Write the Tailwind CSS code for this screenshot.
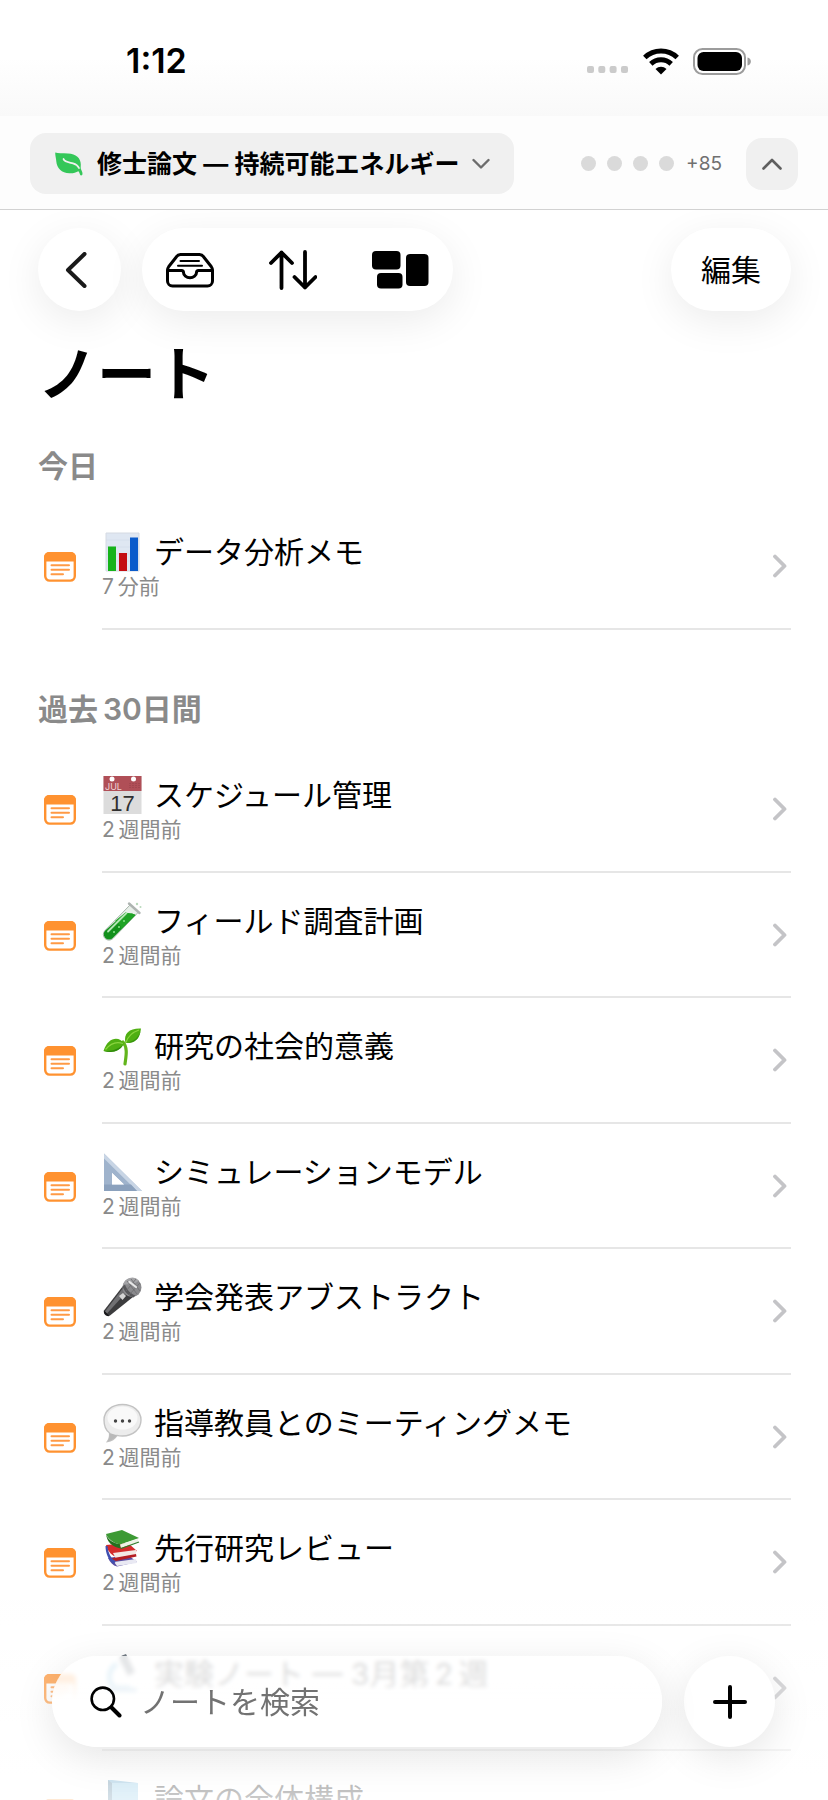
<!DOCTYPE html>
<html lang="ja">
<head>
  <meta charset="UTF-8" />
  <meta name="viewport" content="width=device-width, initial-scale=1" />
  <title>ノート</title>
  <script src="https://cdn.jsdelivr.net/npm/@tailwindcss/browser@4"></script>
</head>
<body class="bg-white text-black h-screen overflow-hidden flex flex-col font-['Inter','Noto_Sans_CJK_JP',sans-serif]">

  <!-- Icon sprite -->
  <svg class="hidden" xmlns="http://www.w3.org/2000/svg">
    <symbol id="note" viewBox="0 0 32 30">
      <rect x="1.2" y="1.2" width="29.6" height="27.4" rx="4.5" fill="#fff" stroke="#ff9230" stroke-width="2.4" />
      <path d="M0 9.5V5a5 5 0 0 1 5-5h22a5 5 0 0 1 5 5v4.5Z" fill="#ff9230" />
      <path d="M7.5 13.3h17.5M7.5 17.8h17.5M7.5 22.3h11.5" stroke="#ff9a45" stroke-width="2" stroke-linecap="round" />
    </symbol>
    <symbol id="chevron" viewBox="0 0 14 24">
      <path d="M2 2.5 11.5 12 2 21.5" fill="none" stroke="#c4c4c7" stroke-width="3.8" stroke-linecap="round" stroke-linejoin="round" />
    </symbol>

    <symbol id="chart" viewBox="0 0 40 40">
      <rect x="4" y="1" width="33" height="38" fill="#dfe7f2" />
      <path d="M4 8h33M4 15h33M4 22h33M4 29h33" stroke="#d6dfec" stroke-width="1" />
      <path d="M4 1h33v38H4Z" fill="none" stroke="#d5dae2" stroke-width="1" />
      <rect x="6" y="14.5" width="8" height="24.5" fill="#16b31b" />
      <rect x="17" y="21" width="8" height="18" fill="#c40d12" />
      <rect x="28" y="5.5" width="8" height="33.5" fill="#0a5bcb" />
    </symbol>
    <symbol id="calendar" viewBox="0 0 40 40">
      <rect x="1.5" y="1" width="38" height="38" fill="#dcdcdc" />
      <rect x="1.5" y="1" width="38" height="15" fill="#b04f57" />
      <circle cx="10" cy="4" r="2.5" fill="#fff" />
      <circle cx="31.5" cy="4" r="2.5" fill="#fff" />
      <path d="M28 8v5M31 8v5M34 8v5M37 8v5" stroke="#944049" stroke-width="1" stroke-dasharray="1 1" />
      <text x="3" y="15" font-size="9" fill="#f0d4d6" font-family="Inter, sans-serif">JUL</text>
      <text x="20.5" y="35.5" font-size="22" fill="#303030" text-anchor="middle" font-family="Liberation Sans, sans-serif">17</text>
    </symbol>
    <symbol id="tube" viewBox="0 0 40 40">
      <path d="M28.5 3.5 36.5 11 11 37.5a5.6 5.6 0 0 1-8-8Z" fill="#e8efe9" stroke="#a9b8ad" stroke-width="1" />
      <path d="M23.5 11.500c3 1.5 6 0 10 2.5L10.8 37a5.3 5.3 0 0 1-7.5-7.5Z" fill="#12901c" />
      <path d="M23.5 11.500c3 1.5 6 0 10 2.5L19 28.500c0-5-3-7-6-8.500Z" fill="#1fa326" />
      <path d="M6 30.5 24.5 12" stroke="#b4e6b5" stroke-width="1.8" stroke-linecap="round" />
      <path d="m27 2.5 10.5 9.5" stroke="#aeb4b1" stroke-width="2.4" stroke-linecap="round" />
      <circle cx="17" cy="26" r="1" fill="#8be38d" /><circle cx="22" cy="20" r="1" fill="#8be38d" /><circle cx="12" cy="31" r="1" fill="#8be38d" />
      <circle cx="35" cy="3" r="1.2" fill="#b9d9bb" /><circle cx="38.5" cy="6" r="1" fill="#b9d9bb" />
    </symbol>
    <symbol id="seedling" viewBox="0 0 40 40">
      <path d="M23 38c1-8 3-16-2-22" fill="none" stroke="#62b51c" stroke-width="3.2" stroke-linecap="round" />
      <path d="M23.5 17C21 7 28 2 39 2.5 38 12 33 17.5 23.5 17Z" fill="#4faf12" />
      <path d="M22 17.5C17 10 6 11 1.5 25c8 2 16 1 20.5-7.5Z" fill="#4faf12" />
      <path d="M24 16.5C26 10 31 6 37 4M21 17.5C14 15 8 18 3.5 23.5" fill="none" stroke="#8ad43f" stroke-width="1.3" />
      <path d="M2 25c8 2 15 1 19-6-6 5-12 6-19 6Z" fill="#2f8a0c" />
      <path d="M38.5 5c-1 8-6 12.5-14 12 7-2 12-5 14-12Z" fill="#37950d" />
    </symbol>
    <symbol id="triangle" viewBox="0 0 40 40">
      <path fill-rule="evenodd" d="M2 1.5 40 39H2ZM10 21v11.5h12Z" fill="#9fb3cc" />
      <path d="M2 1.5 40 39h-5L2 6.5Z" fill="#c8d5e5" />
      <path d="M2 32.5h27L35 39H2Z" fill="#8ba1bd" />
      <path d="M10 21v11.5h12Z" fill="#fff" />
    </symbol>
    <symbol id="mic" viewBox="0 0 40 40">
      <path d="M20.5 9.5 31 20 8 38.500c-2 1.5-7-2-6-5Z" fill="#3c3c3e" />
      <path d="M21 11 3 34.5l2 2L25.5 14Z" fill="#707073" />
      <path d="m2 33.5 5.5 5.500c-3 .8-6.5-2-5.5-5.500Z" fill="#17171a" />
      <path d="m17 19 4-3 3 3-3.5 4Z" fill="#d5d5d5" />
      <circle cx="30" cy="10.500" r="9.5" fill="#8a8a8d" />
      <path d="M21 8a9.5 9.5 0 0 1 16-4.500c-4 4-9 3-16 4.500Z" fill="#a4a4a7" />
      <path d="M20.5 9.500c2 5 5.5 9 11 11l2-2c-5-2-9-6-10.5-11Z" fill="#57575a" />
      <path d="m25 4 10 13M29 2l9 12M34 2 24 14M38 6 27 18" stroke="#6c6c6f" stroke-width=".8" />
      <path d="m27.5 5 6.5 5" stroke="#e8e8e8" stroke-width="2.2" stroke-linecap="round" />
    </symbol>
    <symbol id="bubble" viewBox="0 0 40 40">
      <path d="M20.5 1.500c10.5 0 18.5 6.5 18.5 15.500s-8 16-18.5 16c-2 0-4-.2-5.5-.7C13 35.5 9.5 38 5.5 38.500c1.5-2 2.5-5 2-8.500C4 27.5 2 22.5 2 17 2 8 10 1.5 20.5 1.500Z" fill="#ececec" stroke="#c3c3c3" stroke-width="1.4" />
      <ellipse cx="20.500" cy="15" rx="15" ry="11.500" fill="#f9f9f9" />
      <path d="M15 32.300C13 35.5 9.5 38 5.5 38.500c1.5-2 2.5-5 2-8.500Z" fill="#b9b9b9" />
      <circle cx="13.500" cy="18" r="1.7" fill="#444" /><circle cx="20.500" cy="18" r="1.7" fill="#444" /><circle cx="27.500" cy="18" r="1.7" fill="#444" />
    </symbol>
    <symbol id="books" viewBox="0 0 40 40">
      <path d="m6 30 20-3 9 7-20 4.500c-4-1-7-4-9-8.500Z" fill="#5a4da0" />
      <path d="m12 34 22-3 1 4-20 3Z" fill="#e9e9f3" />
      <path d="m4 17 22-2 9 8-20 6c-5-1-9-5-11-12Z" fill="#d32b2b" />
      <path d="m11 25 23-3v4l-20 5Z" fill="#f3e8e4" />
      <path d="M9 30.5 34 26l.5 2.5L14 33Z" fill="#b51d22" />
      <path d="M4 6 20 2l17 8-19 6.500C11 15 6 11 4 6Z" fill="#3d9a34" />
      <path d="M4 6c2 6 7 9 14 10.500l1 4C10 19 5 14 4 6Z" fill="#23701f" />
      <path d="m18 16.5 18-5.500v3l-17 6Z" fill="#eef3e6" />
      <path d="m19 20.5 18-6.500" stroke="#2f7d29" stroke-width="1.3" />
      <path d="M3.5 18c0 7 3 14 8 18l2-2C9 30 6 25 5.5 18Z" fill="#3f4fb0" />
    </symbol>
    <symbol id="microscope" viewBox="0 0 40 40">
      <path d="m20 1.5 4-1.500 2 4 7 14-7 4-9-18Z" fill="#4a5561" />
      <path d="M15 10C5 16 5 30 14 34h14" fill="none" stroke="#69b0d8" stroke-width="5" />
      <rect x="6" y="34" width="29" height="5" rx="2" fill="#3f86b4" />
    </symbol>
    <symbol id="bluebook" viewBox="0 0 40 40">
      <path d="M6 1h4l26 3v35H9l-3-3Z" fill="#4e9bc8" />
      <path d="M10 4h26v35H10Z" fill="#7cc0e4" />
      <path d="M6 1v35l4 3V4Z" fill="#33698c" />
    </symbol>
  </svg>

  <!-- Status bar -->
  <div class="h-[116px] shrink-0 flex items-start justify-between pt-10 pl-[126px] pr-[76px] bg-linear-to-b from-white from-50% to-[#f9f9f9]">
    <span class="text-[34px] leading-[42px] font-semibold">1:12</span>
    <div class="flex items-center gap-3.5 h-[42px]">
      <svg class="w-[42px] h-7" viewBox="0 0 42 28" fill="#cbcbcb">
        <rect x="0" y="19" width="7" height="7" rx="2" /><rect x="11.300" y="19" width="7" height="7" rx="2" /><rect x="22.600" y="19" width="7" height="7" rx="2" /><rect x="34" y="19" width="7" height="7" rx="2" />
      </svg>
      <svg class="w-9 h-[27px]" viewBox="0 0 36 27">
        <path d="M1.8 9.500a23.5 23.5 0 0 1 32.4 0" fill="none" stroke="#000" stroke-width="5" />
        <path d="M7.8 15.800a15 15 0 0 1 20.4 0" fill="none" stroke="#000" stroke-width="5" />
        <path d="M18 26.5 12.5 21a8 8 0 0 1 11 0Z" />
      </svg>
      <svg class="w-[59px] h-[27px]" viewBox="0 0 59 27">
        <rect x="1" y="1" width="51" height="25" rx="8.500" fill="none" stroke="#9c9c9c" stroke-width="2" />
        <rect x="4.500" y="4" width="44.500" height="19" rx="6" />
        <path d="M54.5 9.500c4.5 1 4.5 7 0 8Z" fill="#9c9c9c" />
      </svg>
    </div>
  </div>

  <!-- Workspace switcher -->
  <header class="h-[94px] shrink-0 flex items-center justify-between pt-0.5 px-[30px] bg-[#fdfdfd] border-b border-[#d2d2d2]">
    <button class="h-[61px] flex items-center rounded-2xl bg-[#f0f0f0] pl-[25px] pr-6">
      <svg class="w-7 h-6 mr-[14px]" viewBox="0 0 28 24">
        <path d="M.3.500C3 1.600 7 1.200 13 1.400 21 1.700 25.800 6 25.800 12.500c0 1.500-.3 3 .1 4.500.5 1.500 1.600 2.700 1.600 4.800 0 2-2 2.300-2.500.7-.5-1.500-.9-2.500-1.700-3.200C21 20.600 18 21.500 14.5 21.300 6.500 21 1.800 16 1.300 9.500 1.100 6 0 3 .3.500Z" fill="#34c759" />
        <path d="M8.500 7c1 3.200 6 3.400 9.500 4.300 3 .8 5 2.500 6 4.700" fill="none" stroke="#f0f0f0" stroke-width="1.800" stroke-linecap="round" />
      </svg>
      <span class="text-[25px] leading-8 font-semibold">修士論文 — 持続可能エネルギー</span>
      <svg class="w-[18px] h-3 ml-3" viewBox="0 0 18 12"><path d="m1.5 2 7.5 7.5L16.5 2" fill="none" stroke="#6c6c6c" stroke-width="2.400" stroke-linecap="round" stroke-linejoin="round" /></svg>
    </button>
    <div class="flex items-center">
      <div class="flex gap-[11px] mr-3">
        <span class="size-[15px] rounded-full bg-[#dadada]"></span>
        <span class="size-[15px] rounded-full bg-[#dadada]"></span>
        <span class="size-[15px] rounded-full bg-[#dadada]"></span>
        <span class="size-[15px] rounded-full bg-[#dadada]"></span>
      </div>
      <span class="text-[19px] leading-6 text-[#707070] mr-6">+85</span>
      <button aria-label="閉じる" class="size-[52px] rounded-2xl bg-[#f0f0f0] flex items-center justify-center">
        <svg class="w-5 h-3" viewBox="0 0 20 12"><path d="m1.5 10.5 8.5-8.5 8.5 8.5" fill="none" stroke="#5f5f5f" stroke-width="2.600" stroke-linecap="round" stroke-linejoin="round" /></svg>
      </button>
    </div>
  </header>

  <main class="flex-1 min-h-0 overflow-hidden pt-[18px] pl-[38px] pr-[37px]">
    <!-- Toolbar -->
    <div class="flex items-center">
      <button aria-label="戻る" class="size-[83px] shrink-0 rounded-full bg-white shadow-[0_10px_40px_rgba(0,0,0,0.08)] flex items-center justify-center">
        <svg class="w-[22px] h-9 mr-2" viewBox="0 0 22 36"><path d="M19.5 2 3 18l16.5 16" fill="none" stroke="#1a1a1a" stroke-width="4" stroke-linecap="round" stroke-linejoin="round" /></svg>
      </button>
      <div class="h-[83px] ml-[21px] flex items-center gap-[55px] rounded-full bg-white shadow-[0_10px_40px_rgba(0,0,0,0.08)] px-6">
        <button aria-label="受信箱">
          <svg class="w-12 h-[38px]" viewBox="0 0 48 38" fill="none" stroke="#000" stroke-width="3" stroke-linecap="round" stroke-linejoin="round">
            <path d="M1.5 19v11a5 5 0 0 0 5 5h35a5 5 0 0 0 5-5V19c0-1.500-.5-2.300-1.300-3.500L37.500 5.700A5 5 0 0 0 33.500 3.500h-19a5 5 0 0 0-4 2.200L2.8 15.500C2 16.700 1.5 17.500 1.5 19Z" />
            <path d="M2 19.500h13.500c1.500 0 2 .6 2 2a6.500 5.200 0 0 0 13 0c0-1.400.5-2 2-2H46" />
            <path d="M14.500 10h18.500M12 14.700h24" stroke-width="2" />
          </svg>
        </button>
        <button aria-label="並べ替え">
          <svg class="w-12 h-10" viewBox="0 0 48 40" fill="none" stroke="#000" stroke-width="3.800" stroke-linecap="round" stroke-linejoin="round">
            <path d="M12.5 38V2.500M2 13 12.5 2.500 23 13M36 2v35.500M25.5 27 36 37.5 46.5 27" />
          </svg>
        </button>
        <button aria-label="表示">
          <svg class="w-[57px] h-[38px]" viewBox="0 0 57 38">
            <rect x="0" y="0" width="28.500" height="18.500" rx="4" /><rect x="5" y="22" width="25.500" height="15.500" rx="4" /><rect x="34" y="3" width="22.500" height="32" rx="4" />
          </svg>
        </button>
      </div>
      <button class="h-[83px] w-[120px] ml-auto rounded-full bg-white shadow-[0_10px_40px_rgba(0,0,0,0.08)] text-[30px] leading-10">編集</button>
    </div>

    <h1 class="mt-6 text-[59px] leading-[80px] font-bold">ノート</h1>

    <h2 class="mt-[31px] mb-[18px] text-[30px] leading-10 font-semibold text-[#8a8a8a]">今日</h2>
    <ul id="today"></ul>

    <h2 class="mt-[59px] mb-[18px] text-[30px] leading-10 font-semibold text-[#8a8a8a]">過去&thinsp;30日間</h2>
    <ul id="month"></ul>
  </main>

  <!-- Search bar floating over the list -->
  <div class="fixed inset-x-0 bottom-0 pt-[56px] pb-[53px] pl-[52px] pr-[53px] flex gap-[22px] bg-linear-to-b from-white/0 to-white/80">
    <div class="flex-1 h-[91px] rounded-full bg-linear-to-b from-white/80 from-30% to-white to-50% backdrop-blur-[2px] shadow-[0_10px_40px_rgba(0,0,0,0.1)] flex items-center pl-[38px] pr-8">
      <svg class="w-8 h-8 shrink-0" viewBox="0 0 32 32" fill="none" stroke="#000" stroke-linecap="round"><circle cx="12.800" cy="12.800" r="11.200" stroke-width="2.600" /><path d="m21.5 21.5 8 8" stroke-width="4" /></svg>
      <label for="search" class="sr-only">検索</label>
      <input id="search" type="text" placeholder="ノートを検索" class="ml-[18px] flex-1 min-w-0 bg-transparent outline-none text-[30px] leading-10 placeholder:text-[#727272]" />
    </div>
    <button aria-label="新規ノート" class="size-[91px] shrink-0 rounded-full bg-white shadow-[0_10px_40px_rgba(0,0,0,0.1)] flex items-center justify-center">
      <svg class="w-[34px] h-[34px]" viewBox="0 0 34 34"><path d="M17 2v30M2 17h30" stroke="#000" stroke-width="4" stroke-linecap="round" /></svg>
    </button>
  </div>

  <script>
    const today = [
      { icon: 'chart', title: 'データ分析メモ', time: '7&thinsp;分前' },
    ];
    const month = [
      { icon: 'calendar', title: 'スケジュール管理', time: '2&thinsp;週間前' },
      { icon: 'tube', title: 'フィールド調査計画', time: '2&thinsp;週間前' },
      { icon: 'seedling', title: '研究の社会的意義', time: '2&thinsp;週間前' },
      { icon: 'triangle', title: 'シミュレーションモデル', time: '2&thinsp;週間前' },
      { icon: 'mic', title: '学会発表アブストラクト', time: '2&thinsp;週間前' },
      { icon: 'bubble', title: '指導教員とのミーティングメモ', time: '2&thinsp;週間前' },
      { icon: 'books', title: '先行研究レビュー', time: '2&thinsp;週間前' },
      { icon: 'microscope', title: '実験ノート — 3月第&thinsp;2&thinsp;週', time: '2&thinsp;週間前' },
      { icon: 'bluebook', title: '論文の全体構成', time: '2&thinsp;週間前' },
    ];

    function renderNotes(id, notes) {
      document.getElementById(id).innerHTML = notes.map(note => `
        <li class="odd:h-[126px] even:h-[125px]">
          <a href="#" class="h-full flex items-center pl-[6px]">
            <svg class="w-8 h-[30px] mr-[26px] shrink-0"><use href="#note" /></svg>
            <span class="flex-1 h-full flex items-center justify-between border-b-2 border-[#e6e6e6] pr-1">
              <span>
                <span class="flex items-center gap-3 text-[30px] leading-[42px]">
                  <svg class="size-10 shrink-0"><use href="#${note.icon}" /></svg>
                  <span>${note.title}</span>
                </span>
                <span class="block text-[21px] leading-7 text-[#8a8a8a]">${note.time}</span>
              </span>
              <svg class="w-[14px] h-6 shrink-0"><use href="#chevron" /></svg>
            </span>
          </a>
        </li>
      `).join('');
    }

    renderNotes('today', today);
    renderNotes('month', month);
  </script>
</body>
</html>
